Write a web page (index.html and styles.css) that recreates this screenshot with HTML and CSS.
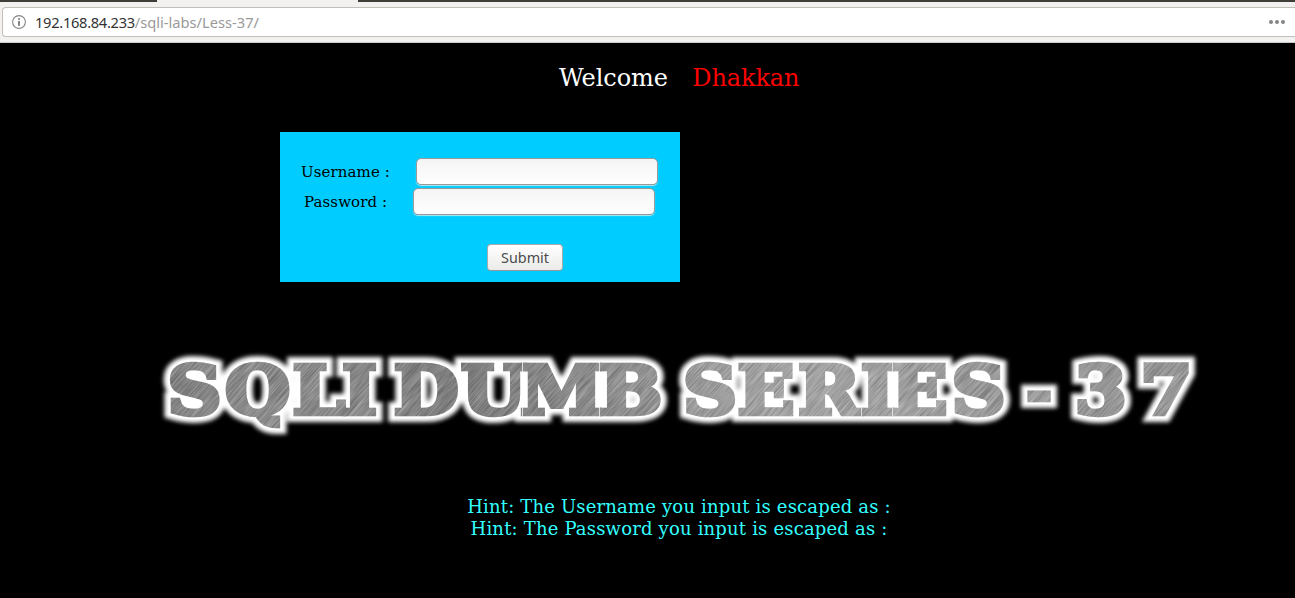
FILE: index.html
```
<!DOCTYPE html>
<html lang="en">
<head>
<meta charset="utf-8">
<title>Less-37</title>
<link rel="stylesheet" href="styles.css">
</head>
<body>
<header class="chrome">
  <div class="tabs"><span class="tab-gap"></span><span class="tab-active"></span><span class="tab-rest"></span></div>
  <div class="urlbar">
    <svg class="info" viewBox="0 0 14 14" width="14" height="14"><circle cx="7" cy="7" r="6.4" fill="none" stroke="#858585" stroke-width="1.1"/><circle cx="7" cy="4" r="1" fill="#777"/><rect x="6.1" y="6" width="1.8" height="4.8" fill="#777"/></svg>
    <span class="url"><span class="host">192.168.84.233</span><span class="path">/sqli-labs/Less-37/</span></span>
    <svg class="dots" viewBox="0 0 16 4" width="16" height="4" fill="#858585"><circle cx="2" cy="2" r="2"/><circle cx="8" cy="2" r="2"/><circle cx="14" cy="2" r="2"/></svg>
  </div>
</header>
<main class="page">
  <h1 class="welcome"><span>Welcome</span><span class="name">Dhakkan</span></h1>
  <form class="login">
    <div class="row"><label for="u">Username :</label><input id="u" type="text"></div>
    <div class="row row-pass"><label for="p">Password :</label><input id="p" type="password"></div>
    <button class="submit" type="button">Submit</button>
  </form>
  <svg class="banner" viewBox="150 340 1060 110" width="1060" height="110">
    <defs>
      <g id="title" class="title" transform="scale(1.1 1)">
        <text x="152.3 204.5 266 311" y="414">SQLI</text>
        <text x="358 419 473 544.5" y="414">DUMB</text>
        <text x="621 670.5 725.5 782 809.5 865" y="414">SERIES</text>
        <text class="dash" x="933.5" y="411">-</text>
        <text x="977 1036.5" y="414">37</text>
      </g>
      <filter id="glow" x="-5%" y="-30%" width="110%" height="160%"><feGaussianBlur stdDeviation="2.2"/></filter>
      <filter id="brushed" x="0" y="0" width="100%" height="100%" color-interpolation-filters="sRGB">
        <feTurbulence type="fractalNoise" baseFrequency="0.03 0.8" numOctaves="3" seed="4"/>
        <feColorMatrix values="1.4 0 0 0 -0.2  1.4 0 0 0 -0.2  1.4 0 0 0 -0.2  0 0 0 0 1"/>
      </filter>
      <linearGradient id="metal" x1="0" x2="1">
        <stop offset="0" stop-color="#858585"/><stop offset=".15" stop-color="#929292"/><stop offset=".3" stop-color="#7e7e7e"/><stop offset=".42" stop-color="#909090"/><stop offset=".6" stop-color="#b0b0b0"/><stop offset=".75" stop-color="#a4a4a4"/><stop offset="1" stop-color="#9e9e9e"/>
      </linearGradient>
      <mask id="letters" maskUnits="userSpaceOnUse" x="150" y="340" width="1060" height="110"><use href="#title" fill="#fff" stroke="#fff" stroke-width="4.6"/></mask>
    </defs>
    <use href="#title" fill="#fff" stroke="#fff" stroke-width="16" filter="url(#glow)"/>
    <use href="#title" fill="#fff" stroke="#fff" stroke-width="8"/>
    <g mask="url(#letters)">
      <rect x="150" y="340" width="1060" height="110" fill="url(#metal)"/>
      <g opacity=".25"><rect x="100" y="-200" width="1160" height="1160" transform="rotate(-48 680 395)" filter="url(#brushed)"/></g>
      <path d="M522.5 350V425M599.5 350V425M861.5 350V425M892.5 350V425" stroke="#ddd" stroke-width="1"/>
    </g>
  </svg>
  <p class="hint">Hint: The Username you input is escaped as :<br>Hint: The Password you input is escaped as :</p>
</main>
</body>
</html>
```
FILE: styles.css
```
* { box-sizing: border-box; }
body { margin: 0; background: #000; overflow: hidden; font-family: "DejaVu Serif", serif; }
.chrome { height: 43px; background: #f2f1f0; border-bottom: 1px solid #c9ccc8; }
.tabs { display: flex; height: 2px; margin-bottom: 5px; }
.tab-gap { width: 157px; background: #3f3d37; }
.tab-active { width: 201px; }
.tab-rest { flex: 1; background: #3f3d37; }
.urlbar { display: flex; align-items: center; height: 30px; margin-left: 2px; padding: 0 10px 0 9px; background: #fff; border: 1px solid #c2bfbb; border-right: 0; border-radius: 4px 0 0 4px; }
.url { flex: 1; margin-left: 9px; font: 14.67px/28px "Noto Sans", sans-serif; white-space: nowrap; letter-spacing: -0.3px; }
.host { color: #333; }
.path { color: #999; letter-spacing: 0; }
.page { height: 555px; padding-top: 21px; }
.welcome { display: flex; gap: 24.5px; margin: 0 0 0 559px; height: 68px; font-size: 24px; line-height: 28px; font-weight: 400; color: #fff; letter-spacing: -0.1px; }
.name { color: #f00; }
.login { display: flex; flex-direction: column; width: 400px; height: 150px; margin-left: 280px; padding-top: 26px; background: #0cf; }
.row { display: flex; align-items: center; height: 28px; margin: 0 0 2px 21px; font-size: 15px; letter-spacing: 0.1px; }
.row-pass { margin-left: 24px; }
.row label { width: 115px; white-space: nowrap; }
.row-pass label { width: 109px; }
.row input { align-self: flex-start; width: 242px; height: 27px; border: 1px solid #999; border-radius: 5px; background: linear-gradient(#f4f4f4, #fff); box-shadow: 0 1px 1px #b5e5f2; }
.submit { width: 76px; height: 27px; margin: 26px 0 0 207px; padding: 0 0 1px; border: 1px solid #aaa; border-bottom-color: #999; border-radius: 4px; background: linear-gradient(#fff, #ebebea); color: #4c4c4c; font: 14.4px/23px "Noto Sans", sans-serif; }
.banner { display: block; margin: 58px 0 0 150px; }
.title { font: bold 68px "DejaVu Serif", serif; stroke-linejoin: miter; stroke-miterlimit: 2; }
.dash { font-size: 54px; }
.hint { margin: 46px 0 0 467px; width: 424px; text-align: center; white-space: nowrap; color: #3ff; font-size: 18px; line-height: 22px; letter-spacing: 0.18px; }
```
